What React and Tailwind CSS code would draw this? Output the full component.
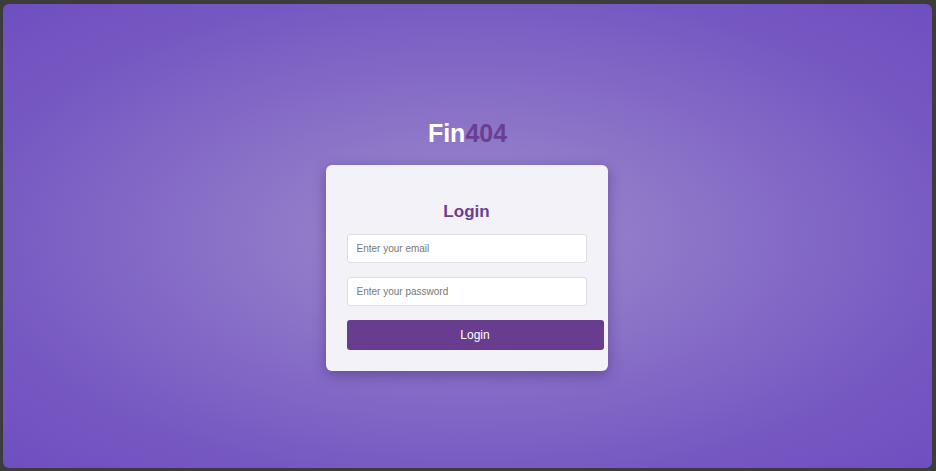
import React from 'react';

function App() {
  return (
    <div className="w-[936px] h-[471px] bg-[#3c3c3c] pt-[4px] pl-[3px] pr-[4px] pb-[3px] font-['Liberation_Sans',Arial,sans-serif]">
      <div className="w-full h-full rounded-[6px] bg-[radial-gradient(ellipse_at_center,#9c8dcc_0%,#8b74c8_35%,#7658c2_75%,#6f4fc0_100%)] flex flex-col items-center pt-[114px]">
        <h1 className="text-[25px] font-bold leading-[30px] text-white">
          Fin<span className="text-[#6a3f92]">404</span>
        </h1>
        <div className="mt-[17px] mr-[2px] w-[282px] h-[206px] rounded-[6px] bg-[#f4f2f9] shadow-[0_4px_14px_rgba(60,30,110,0.45)] px-[21px] pt-[36px]">
          <h2 className="text-center text-[17px] font-bold leading-[22px] text-[#6a3f92]">Login</h2>
          <input
            type="email"
            placeholder="Enter your email"
            className="mt-[11px] block w-[240px] h-[29px] rounded-[3px] border border-[#dddde4] bg-white px-[9px] text-[10px] text-[#333] placeholder:text-[#777] outline-none"
          />
          <input
            type="password"
            placeholder="Enter your password"
            className="mt-[14px] block w-[240px] h-[29px] rounded-[3px] border border-[#dddde4] bg-white px-[9px] text-[10px] text-[#333] placeholder:text-[#777] outline-none"
          />
          <button className="mt-[14px] block w-[257px] h-[30px] rounded-[3px] bg-[#683c8e] text-white text-[12px]">
            Login
          </button>
        </div>
      </div>
    </div>
  );
}

export default App;
